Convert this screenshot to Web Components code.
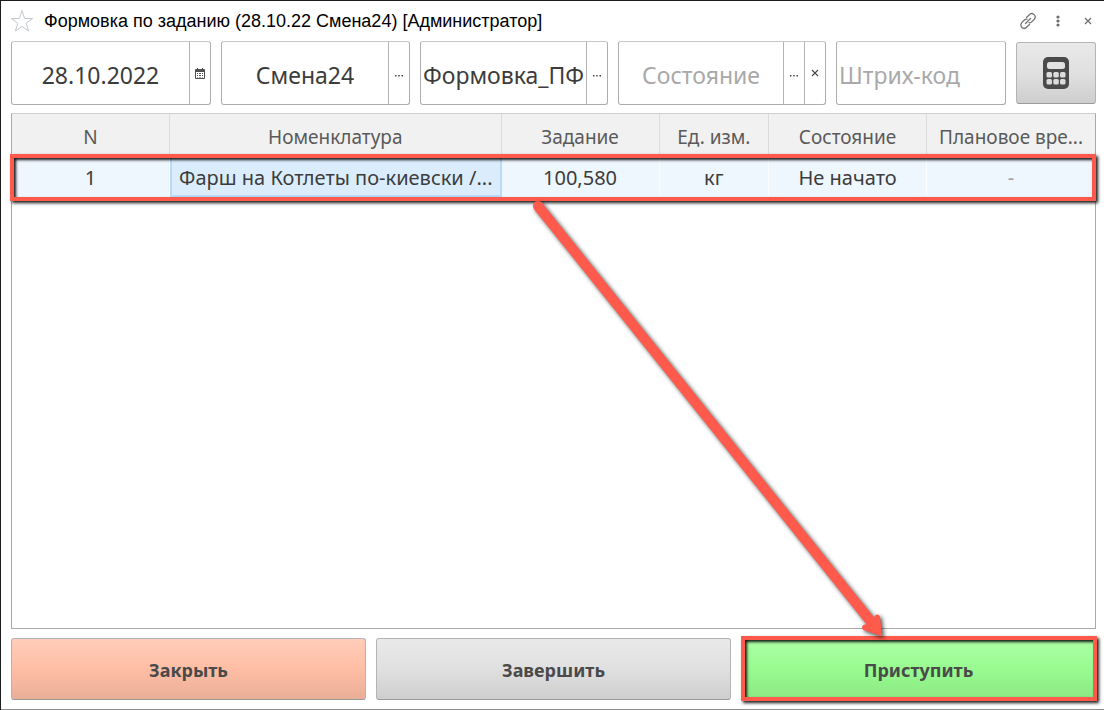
<!DOCTYPE html>
<html lang="ru">
<head>
<meta charset="utf-8">
<title>Формовка по заданию</title>
<style>
  body { margin: 0; background: #fff; }
</style>
</head>
<body>
<app-window>
  <title-bar slot="title">Формовка по заданию (28.10.22 Смена24) [Администратор]</title-bar>
  <pick-field slot="filters" label="Дата" value="28.10.2022" actions="calendar"></pick-field>
  <pick-field slot="filters" label="Смена" value="Смена24" actions="more"></pick-field>
  <pick-field slot="filters" label="Участок" value="Формовка_ПФ" actions="more"></pick-field>
  <pick-field slot="filters" label="Состояние" placeholder="Состояние" actions="more clear"></pick-field>
  <pick-field slot="filters" label="Штрих-код" placeholder="Штрих-код" align="left"></pick-field>
  <action-button slot="filters" label="Калькулятор">
    <svg width="26" height="32" viewBox="0 0 26 32" aria-hidden="true">
      <rect width="26" height="32" rx="5" fill="#4a4a4a"/>
      <rect x="4" y="5" width="18" height="7" rx="2.500" fill="#e2e2e2"/>
      <g fill="#dcdcdc">
        <rect x="3.500" y="15" width="5.500" height="5.500" rx="1.500"/><rect x="10.300" y="15" width="5.500" height="5.500" rx="1.500"/><rect x="17" y="15" width="5.500" height="5.500" rx="1.500"/>
        <rect x="3.500" y="22" width="5.500" height="5.500" rx="1.500"/><rect x="10.300" y="22" width="5.500" height="5.500" rx="1.500"/><rect x="17" y="22" width="5.500" height="5.500" rx="1.500"/>
      </g>
    </svg>
  </action-button>
  <task-table slot="content"></task-table>
  <action-button slot="actions" tone="close">Закрыть</action-button>
  <action-button slot="actions">Завершить</action-button>
  <action-button slot="actions" tone="start" marked>Приступить</action-button>
  <callout-arrow slot="overlay"></callout-arrow>
</app-window>

<script>
class BaseElement extends HTMLElement {
  render(html) {
    const t = document.createElement('template');
    t.innerHTML = html;
    this.attachShadow({ mode: 'open' }).append(t.content.cloneNode(true));
  }
}

customElements.define('app-window', class extends BaseElement {
  connectedCallback() {
    this.render(`
      <style>
        :host {
          display: flex; flex-direction: column; position: relative;
          box-sizing: border-box; min-height: 100vh; padding: 0 8px 9px 10px;
          border: solid #1c1c1c; border-width: 1px 0 0 1px;
          box-shadow: inset 0 -1px #8c8c8c;
          background: #fff; color: #3c3c3c;
          font: 20px/28px "Noto Sans", sans-serif;
        }
        .filters {
          display: grid; gap: 10px; margin-bottom: 8px;
          grid-template-columns: 200fr 189fr 188fr 208fr 170fr 80fr;
        }
        main { flex: 1; display: flex; margin-bottom: 8px; }
        .actions { display: grid; gap: 10px; grid-template-columns: repeat(3, 1fr); }
      </style>
      <slot name="title"></slot>
      <div class="filters"><slot name="filters"></slot></div>
      <main><slot name="content"></slot></main>
      <div class="actions"><slot name="actions"></slot></div>
      <slot name="overlay"></slot>`);
  }
});

customElements.define('title-bar', class extends BaseElement {
  connectedCallback() {
    this.render(`
      <style>
        :host {
          display: flex; align-items: center; height: 40px; color: #000;
          font: 18px/24px "Liberation Sans", Arial, sans-serif;
        }
        h1 { flex: 1; margin: 0; font: inherit; }
        button {
          display: grid; place-items: center; width: 30px; height: 24px;
          padding: 0; border: 0; background: none;
        }
        .star { width: 22px; margin-right: 11px; }
        .tools { display: flex; margin-right: -7px; }
        svg { display: block; }
      </style>
      <button class="star" aria-label="Добавить в избранное">
        <svg width="22" height="24" viewBox="1 0 22 24" fill="none" stroke="#c3c9d1">
          <path d="M12 1.500l2.600 8h8l-6.400 4.800 2.400 7.700L12 17.400 5.400 22l2.400-7.700L1.400 9.500h8z"/>
        </svg>
      </button>
      <h1><slot></slot></h1>
      <div class="tools">
        <button aria-label="Получить ссылку">
          <svg width="18" height="18" viewBox="0 0 18 18" fill="none" stroke="#757575" stroke-width="1.300" stroke-linecap="round">
            <path d="M7.500 5.500l2.600-2.400a3.200 3.200 0 0 1 5.400 3.800q-.3.700-3.300 3.300a3.200 3.200 0 0 1-2.200.6M10.500 12.500l-2.600 2.400a3.200 3.200 0 0 1-5.400-3.800q.3-.7 3.300-3.300a3.200 3.200 0 0 1 2.200-.6M6.500 11.500l5-5"/>
          </svg>
        </button>
        <button aria-label="Ещё">
          <svg width="4" height="12" viewBox="0 0 4 12" fill="#6c6c6c">
            <circle cx="2" cy="2" r="1.600"/><circle cx="2" cy="6" r="1.600"/><circle cx="2" cy="10" r="1.600"/>
          </svg>
        </button>
        <button aria-label="Закрыть окно">
          <svg width="8" height="8" viewBox="0 0 8 8" stroke="#707070" stroke-width="1.300"><path d="M1 1l6 6M7 1L1 7"/></svg>
        </button>
      </div>`);
  }
});

const ICONS = {
  calendar: ['Выбрать дату', `<svg width="10" height="11" viewBox="0 0 10 11">
      <path d="M1 1h1V0h1v1h4V0h1v1h1a1 1 0 0 1 1 1v8a1 1 0 0 1-1 1H1a1 1 0 0 1-1-1V2a1 1 0 0 1 1-1z" fill="#505050"/>
      <path d="M1 4h8v6H1z" fill="#fff"/>
      <path d="M2 5h1v1H2zM4 5h2v1H4zM7 5h1v1H7zM2 7h1v1H2zM4 7h2v1H4zM7 7h1v1H7zM2 9h1v.6H2zM4 9h2v.6H4zM7 9h1v.6H7z" fill="#505050"/></svg>`],
  more: ['Выбрать', `<svg width="10" height="10" viewBox="0 0 10 10" fill="#444"><path d="M1 7h1.500v1.500H1zM4.200 7h1.500v1.500H4.200zM7.500 7H9v1.500H7.500z"/></svg>`],
  clear: ['Очистить', `<svg width="8" height="8" viewBox="0 0 8 8" stroke="#444" stroke-width="1.100"><path d="M1 1l6 6M7 1L1 7"/></svg>`]
};

customElements.define('pick-field', class extends BaseElement {
  connectedCallback() {
    const label = this.getAttribute('label');
    const buttons = (this.getAttribute('actions') || '').split(' ').filter(Boolean)
      .map(a => `<button aria-label="${ICONS[a][0]}: ${label}">${ICONS[a][1]}</button>`).join('');
    this.render(`
      <style>
        :host {
          display: flex; box-sizing: border-box; height: 64px; min-width: 0;
          border: 1px solid #adadad; border-top-color: #c8c8c8; border-radius: 3px; background: #fff;
        }
        input {
          flex: 1; min-width: 0; box-sizing: border-box; padding: 3px 2px 0; border: 0; outline: 0;
          background: none; color: #3c3c3c; text-align: center;
          font: 23px/32px "Noto Sans", sans-serif;
        }
        :host([align="left"]) input { text-align: left; }
        input::placeholder { color: #a9a9a9; opacity: 1; }
        button {
          display: grid; place-items: center; flex: none; box-sizing: border-box; width: 21px;
          padding: 0; border: 0; border-left: 1px solid #b4b4b4; background: none;
        }
      </style>
      <input type="text" aria-label="${label}" value="${this.getAttribute('value') || ''}" placeholder="${this.getAttribute('placeholder') || ''}">
      ${buttons}`);
  }
});

customElements.define('action-button', class extends BaseElement {
  connectedCallback() {
    const label = this.getAttribute('label');
    this.render(`
      <style>
        :host { display: block; position: relative; padding: 1px 0; }
        button {
          display: grid; place-items: center; box-sizing: border-box; width: 100%; height: 62px;
          padding: 2px 0 0; border: 1px solid #b4b4b4; border-bottom-color: #9a9a9a; border-radius: 3px;
          background: linear-gradient(#e9e9e9, #e0e0e0 50%, #cecece);
          color: #4a4a4a; font: bold 18px/24px "Noto Sans", sans-serif;
        }
        :host([label]) button { padding: 0; }
        :host([tone="close"]) button { background: linear-gradient(#ffcdb9, #ffbea5 50%, #e9ae98); }
        :host([tone="start"]) button { background: linear-gradient(#adffa5, #98fb90 50%, #8ce884); }
        callout-frame { inset: -1px -1px 0 0; }
      </style>
      <button ${label ? `aria-label="${label}"` : ''}><slot></slot></button>
      ${this.hasAttribute('marked') ? '<callout-frame></callout-frame>' : ''}`);
  }
});

customElements.define('task-table', class extends BaseElement {
  connectedCallback() {
    this.render(`
      <style>
        :host {
          flex: 1; display: block; position: relative; box-sizing: border-box;
          border: 1px solid #a9a9a9; border-top-color: #cfcfcf; background: #fff;
        }
        table { width: 100%; table-layout: fixed; border-collapse: separate; border-spacing: 0; }
        th, td {
          box-sizing: border-box; padding: 4px 4px 0; overflow: hidden; white-space: nowrap;
          text-align: center; font: 19px/28px "Noto Sans", sans-serif; border-right: 1px solid #dcdcdc;
        }
        th { height: 41px; background: #f1f1f1; color: #5a5a5a; }
        td { height: 42px; background: #eef6fe; color: #3c3c3c; border-right-color: #fafdff; font-size: 20px; }
        td.current { background: #dbedfc; border: 2px solid #b7dbf8; }
        th:last-child, td:last-child { border-right: 0; }
        td.empty { color: #a0a0a0; }
        callout-frame { inset: 40px -1px auto -2px; height: 47px; }
      </style>
      <table>
        <colgroup>
          <col style="width:14.600%"><col style="width:30.600%"><col style="width:14.600%">
          <col style="width:10.100%"><col style="width:14.600%"><col>
        </colgroup>
        <thead><tr><th>N</th><th>Номенклатура</th><th>Задание</th><th>Ед. изм.</th><th>Состояние</th><th>Плановое вре...</th></tr></thead>
        <tbody><tr><td>1</td><td class="current">Фарш на Котлеты по-киевски /...</td><td>100,580</td><td>кг</td><td>Не начато</td><td class="empty">-</td></tr></tbody>
      </table>
      <callout-frame></callout-frame>`);
  }
});

customElements.define('callout-frame', class extends BaseElement {
  connectedCallback() {
    this.render(`
      <style>
        :host {
          position: absolute; box-sizing: border-box; border: 4px solid #ff5a4b; pointer-events: none;
          box-shadow: 2px 2px 3px rgba(0, 0, 0, .9), inset 2px 2px 3px rgba(0, 0, 0, .9);
        }
      </style>`);
  }
});

customElements.define('callout-arrow', class extends BaseElement {
  connectedCallback() {
    this.render(`
      <style>
        :host { position: absolute; inset: -1px 0 0 -1px; pointer-events: none; }
        svg { display: block; width: 100%; height: 100%; filter: drop-shadow(2px 2px 2px rgba(0, 0, 0, .7)); }
      </style>
      <svg viewBox="0 0 1104 710" aria-hidden="true">
        <path d="M538 206L872 623" fill="none" stroke="#ff5a4b" stroke-width="10" stroke-linecap="round"/>
        <path d="M881 635l-17-6q-2-2 0-3l8-3 4-7q2-1 3 1z" fill="#ff5a4b" stroke="#ff5a4b" stroke-width="2" stroke-linejoin="round"/>
      </svg>`);
  }
});
</script>
</body>
</html>
